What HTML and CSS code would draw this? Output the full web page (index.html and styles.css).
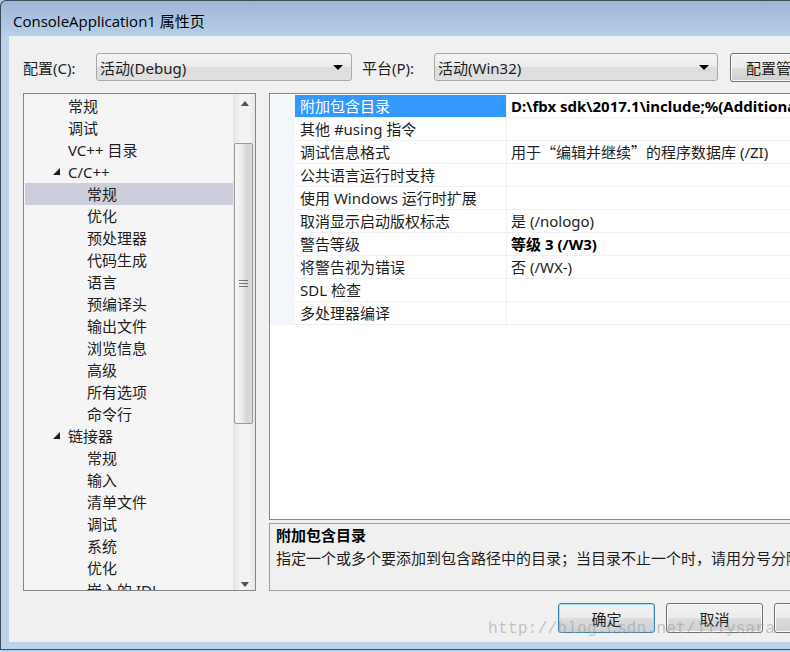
FILE: index.html
```html
<!DOCTYPE html>
<html lang="zh-CN">
<head>
    <meta charset="UTF-8">
    <title>ConsoleApplication1 属性页</title>
    <link rel="stylesheet" href="styles.css">
</head>
<body>
    <div class="window">
        <div class="titlebar">ConsoleApplication1 属性页</div>
        <div class="client">
            <div class="config-bar">
                <span class="field-label">配置(C):</span>
                <div class="combo combo-config">
                    <span class="combo-text">活动(Debug)</span>
                    <span class="combo-arrow"></span>
                </div>
                <span class="field-label field-platform">平台(P):</span>
                <div class="combo combo-platform">
                    <span class="combo-text">活动(Win32)</span>
                    <span class="combo-arrow"></span>
                </div>
                <button class="btn btn-manager">配置管理器(O)...</button>
            </div>

            <div class="main">
                <div class="tree">
                    <ul class="tree-list">
                        <li class="lvl1">常规</li>
                        <li class="lvl1">调试</li>
                        <li class="lvl1">VC++ 目录</li>
                        <li class="lvl1 open"><span class="twisty"></span>C/C++</li>
                        <li class="lvl2 selected">常规</li>
                        <li class="lvl2">优化</li>
                        <li class="lvl2">预处理器</li>
                        <li class="lvl2">代码生成</li>
                        <li class="lvl2">语言</li>
                        <li class="lvl2">预编译头</li>
                        <li class="lvl2">输出文件</li>
                        <li class="lvl2">浏览信息</li>
                        <li class="lvl2">高级</li>
                        <li class="lvl2">所有选项</li>
                        <li class="lvl2">命令行</li>
                        <li class="lvl1 open"><span class="twisty"></span>链接器</li>
                        <li class="lvl2">常规</li>
                        <li class="lvl2">输入</li>
                        <li class="lvl2">清单文件</li>
                        <li class="lvl2">调试</li>
                        <li class="lvl2">系统</li>
                        <li class="lvl2">优化</li>
                        <li class="lvl2">嵌入的 IDL</li>
                    </ul>
                    <div class="scrollbar">
                        <div class="sb-btn"><span class="sb-up"></span></div>
                        <div class="sb-track">
                            <div class="sb-thumb"><span class="grip"></span></div>
                        </div>
                        <div class="sb-btn"><span class="sb-down"></span></div>
                    </div>
                </div>

                <div class="right-pane">
                    <div class="prop-grid">
                        <div class="prop-row selected">
                            <span class="strip"></span>
                            <span class="prop-name">附加包含目录</span>
                            <span class="prop-value strong">D:\fbx sdk\2017.1\include;%(AdditionalIncludeDirectories)</span>
                        </div>
                        <div class="prop-row">
                            <span class="strip"></span>
                            <span class="prop-name">其他 #using 指令</span>
                            <span class="prop-value"></span>
                        </div>
                        <div class="prop-row">
                            <span class="strip"></span>
                            <span class="prop-name">调试信息格式</span>
                            <span class="prop-value">用于<span class="cjk">“</span>编辑并继续<span class="cjk">”</span>的程序数据库 (/ZI)</span>
                        </div>
                        <div class="prop-row">
                            <span class="strip"></span>
                            <span class="prop-name">公共语言运行时支持</span>
                            <span class="prop-value"></span>
                        </div>
                        <div class="prop-row">
                            <span class="strip"></span>
                            <span class="prop-name">使用 Windows 运行时扩展</span>
                            <span class="prop-value"></span>
                        </div>
                        <div class="prop-row">
                            <span class="strip"></span>
                            <span class="prop-name">取消显示启动版权标志</span>
                            <span class="prop-value">是 (/nologo)</span>
                        </div>
                        <div class="prop-row">
                            <span class="strip"></span>
                            <span class="prop-name">警告等级</span>
                            <span class="prop-value strong">等级 3 (/W3)</span>
                        </div>
                        <div class="prop-row">
                            <span class="strip"></span>
                            <span class="prop-name">将警告视为错误</span>
                            <span class="prop-value">否 (/WX-)</span>
                        </div>
                        <div class="prop-row">
                            <span class="strip"></span>
                            <span class="prop-name">SDL 检查</span>
                            <span class="prop-value"></span>
                        </div>
                        <div class="prop-row">
                            <span class="strip"></span>
                            <span class="prop-name">多处理器编译</span>
                            <span class="prop-value"></span>
                        </div>
                    </div>

                    <div class="desc">
                        <div class="desc-title">附加包含目录</div>
                        <div class="desc-text">指定一个或多个要添加到包含路径中的目录；当目录不止一个时，请用分号分隔。</div>
                    </div>
                </div>
            </div>

            <div class="button-row">
                <button class="btn btn-default">确定</button>
                <button class="btn">取消</button>
                <button class="btn">应用(A)</button>
            </div>
        </div>
    </div>

    <div class="watermark">http://blog.csdn.net/lilysara</div>
</body>
</html>
```

FILE: styles.css
```css
body {
    margin: 0;
    width: 790px;
    height: 652px;
    overflow: hidden;
    background: #bcd3ec;
    font-family: 'Noto Sans', 'Noto Sans CJK SC', sans-serif;
    font-size: 15px;
    color: #1e1e1e;
    position: relative;
}
.window {
    width: 900px;
    height: 650px;
    border-left: 1px solid #3d4a58;
    border-top: 1px solid #3d4a58;
    border-bottom: 1px solid #2f5566;
    border-top-left-radius: 6px;
    background: linear-gradient(to bottom, #9cb7d7 0px, #b4cbe6 30px, #bdd3eb 40px);
    box-sizing: border-box;
    padding: 0 0 7px 8px;
    display: flex;
    flex-direction: column;
}
.titlebar {
    height: 35px;
    line-height: 40px;
    padding-left: 4px;
    font-family: 'Open Sans', 'Noto Sans CJK SC', sans-serif;
    font-size: 15px;
    color: #000;
    box-sizing: border-box;
}
.client {
    flex: 1;
    background: #f0f0f0;
    padding: 17px 0 0 14px;
    box-sizing: border-box;
}

/* config bar */
.config-bar {
    display: flex;
    align-items: center;
    height: 28px;
}
.field-label {
    width: 73px;
}
.field-platform {
    margin-left: 10px;
    width: 72px;
}
.combo {
    height: 28px;
    box-sizing: border-box;
    border: 1px solid #a9a9a9;
    border-radius: 3px;
    background: linear-gradient(to bottom, #f4f4f4 0%, #ebebeb 50%, #dddddd 51%, #e0e0e0 100%);
    display: flex;
    align-items: center;
    padding: 0 8px 0 3px;
    flex: none;
}
.combo-config { width: 256px; }
.combo-platform { width: 284px; }
.combo-text {
    flex: 1;
}
.combo-arrow {
    width: 0;
    height: 0;
    border-left: 5px solid transparent;
    border-right: 5px solid transparent;
    border-top: 5px solid #000;
}
.btn {
    font-family: 'Noto Sans', 'Noto Sans CJK SC', sans-serif;
    font-size: 15px;
    color: #1e1e1e;
    height: 30px;
    border: 1px solid #707070;
    border-radius: 3px;
    background: linear-gradient(to bottom, #f2f2f2 0%, #ebebeb 50%, #dddddd 51%, #cfcfcf 100%);
    padding: 0;
    box-shadow: inset 0 0 0 1px #fcfcfc;
    flex: none;
}
.btn-manager {
    margin-left: 12px;
    width: 130px;
    height: 29px;
    text-align: left;
    padding-left: 15px;
}

/* main area */
.main {
    display: flex;
    margin-top: 12px;
}
.tree {
    width: 233px;
    height: 498px;
    box-sizing: border-box;
    border: 1px solid #828790;
    background: #f5f5f5;
    display: flex;
    overflow: hidden;
    flex: none;
}
.tree-list {
    list-style: none;
    margin: 0;
    padding: 1px 0 0 1px;
    flex: 1;
}
.tree-list li {
    height: 22px;
    line-height: 22px;
    white-space: nowrap;
    position: relative;
}
.tree-list .lvl1 {
    padding-left: 43px;
}
.tree-list .lvl2 {
    padding-left: 62px;
}
.tree-list .selected {
    background: #cccedb;
}
.twisty {
    position: absolute;
    left: 28px;
    top: 7px;
    width: 0;
    height: 0;
    border-left: 7px solid transparent;
    border-bottom: 7px solid #1e1e1e;
}
.scrollbar {
    width: 21px;
    display: flex;
    flex-direction: column;
    border-left: 1px solid #e3e3e3;
    background: linear-gradient(to right, #e6e6e6 0%, #f3f3f3 30%, #f3f3f3 70%, #e6e6e6 100%);
}
.sb-btn {
    height: 22px;
    display: flex;
    align-items: center;
    justify-content: center;
}
.sb-up, .sb-down {
    width: 0;
    height: 0;
    border-left: 4px solid transparent;
    border-right: 4px solid transparent;
}
.sb-up { border-bottom: 5px solid #4f4f4f; margin-top: -4px; }
.sb-down { border-top: 5px solid #4f4f4f; margin-top: 10px; }
.sb-track {
    flex: 1;
    padding-top: 27px;
}
.sb-thumb {
    height: 281px;
    box-sizing: border-box;
    width: 19px;
    border: 1px solid #9b9b9b;
    border-radius: 2px;
    background: linear-gradient(to right, #f6f6f6 0%, #ececec 40%, #d4d4d4 70%, #dcdcdc 100%);
    display: flex;
    align-items: center;
    justify-content: center;
}
.grip {
    width: 9px;
    height: 7px;
    background: repeating-linear-gradient(to bottom, #5a5a5a 0, #5a5a5a 1px, transparent 1px, transparent 3px);
    opacity: 0.8;
}

/* property grid */
.right-pane {
    margin-left: 13px;
    width: 560px;
    display: flex;
    flex-direction: column;
}
.prop-grid {
    height: 427px;
    box-sizing: border-box;
    border: 1px solid #828790;
    background: #fff;
    padding-top: 1px;
}
.prop-row {
    display: grid;
    grid-template-columns: 25px 212px 1fr;
    height: 23px;
    line-height: 22px;
    white-space: nowrap;
}
.strip {
    background: #f3f6fb;
}
.prop-name {
    padding-left: 5px;
    border-bottom: 1px solid #edf0f5;
    border-right: 1px solid #edf0f5;
    overflow: hidden;
}
.prop-value {
    padding-left: 4px;
    border-bottom: 1px solid #edf0f5;
    overflow: hidden;
}
.cjk {
    font-family: 'Noto Sans CJK SC', sans-serif;
}
.prop-row.selected .prop-name {
    background: #3399ff;
    color: #fff;
}
.strong {
    font-weight: bold;
    color: #000;
}

/* description */
.desc {
    margin-top: 3px;
    height: 68px;
    box-sizing: border-box;
    border: 1px solid #a0a0a0;
    padding: 0 6px;
    line-height: 23px;
    white-space: nowrap;
    overflow: hidden;
}
.desc-title {
    font-weight: bold;
    color: #000;
}

/* bottom buttons */
.button-row {
    display: flex;
    gap: 11px;
    margin-top: 12px;
    padding-left: 535px;
}
.button-row .btn {
    width: 97px;
}
.btn-default {
    border-color: #3c7fb1;
    box-shadow: inset 0 0 0 1px #a9dcf8;
}

.watermark {
    position: absolute;
    left: 488px;
    top: 619px;
    font-family: 'Liberation Mono', monospace;
    font-size: 16.5px;
    color: rgba(150, 150, 150, 0.5);
    pointer-events: none;
}
```
